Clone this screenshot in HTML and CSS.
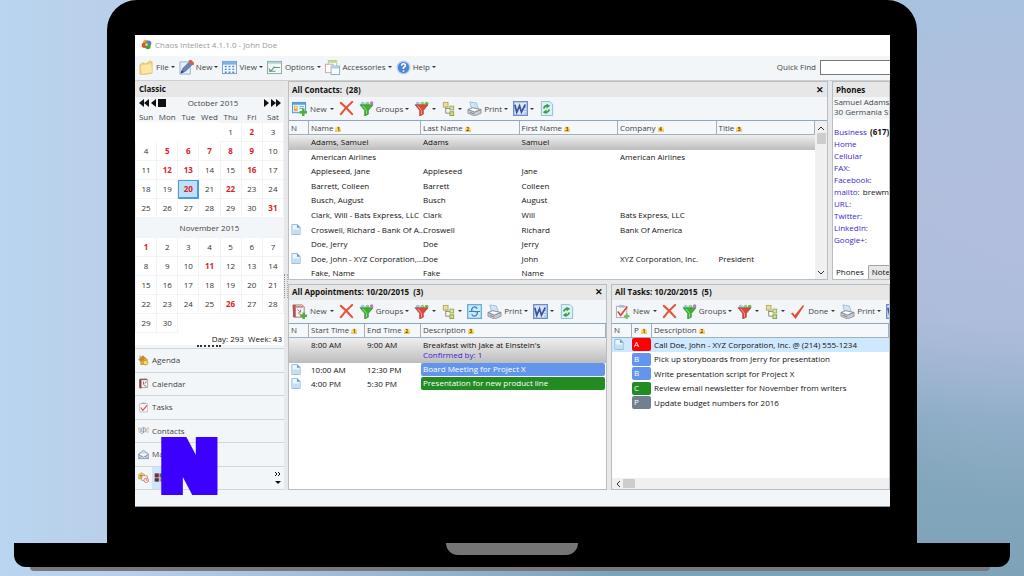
FILE: index.html
```html
<!DOCTYPE html>
<html lang="en">
<head>
    <meta charset="UTF-8">
    <meta name="viewport" content="width=device-width, initial-scale=1.0">
    <title>Chaos Intellect 4.1.1.0 - John Doe</title>
    <link rel="stylesheet" href="styles.css">
</head>
<body>
    <svg class="sprite" aria-hidden="true">
        <symbol id="i-app" viewBox="0 0 16 16">
            <circle cx="7" cy="5" r="4" fill="#e8a33a"/><circle cx="11" cy="6" r="4" fill="#4b86c9"/><circle cx="5" cy="9" r="4" fill="#d8572f"/><circle cx="10" cy="11" r="4" fill="#4f9d3c"/><circle cx="8" cy="8" r="2" fill="#f5d27a"/>
        </symbol>
        <symbol id="i-folder" viewBox="0 0 16 16">
            <path d="M1 5l3-2 3 1 5-3 2 1v12l-11 2-2-1z" fill="#f0d27c" stroke="#d9b75a" stroke-width=".7"/><path d="M2 6l11-2 1 9-11 2z" fill="#fbe7a3"/>
        </symbol>
        <symbol id="i-edit" viewBox="0 0 16 16">
            <path d="M1 2h11v13H1z" fill="#e3effa" stroke="#8fb0d3"/><path d="M2 14l2-5 8-8 3 3-8 8z" fill="#6f7fb8" stroke="#4c5a8c" stroke-width=".6"/><path d="M12 1l3 3" stroke="#d9603f" stroke-width="3" stroke-linecap="round"/><path d="M2 14l1-3 2 2z" fill="#333"/>
        </symbol>
        <symbol id="i-view" viewBox="0 0 16 16">
            <rect x=".5" y="1.500" width="15" height="13" fill="#f4f9fd" stroke="#6ea0d6"/><path d="M1 2h14v3H1z" fill="#7fb2e6"/><path d="M3 7h2M7 7h2M11 7h2M3 10h2M7 10h2M11 10h2M3 13h2M7 13h2M11 13h2" stroke="#4b86c9" stroke-width="1.500"/>
        </symbol>
        <symbol id="i-options" viewBox="0 0 16 16">
            <rect x=".5" y="1.500" width="15" height="13" fill="#f3f9f8" stroke="#86a8ab"/><path d="M1 2h14v2H1z" fill="#b4d2d8"/><path d="M2 9l2 3 4-5M8 8h6M2 12h7" stroke="#5f9a78" stroke-width="1.200" fill="none"/>
        </symbol>
        <symbol id="i-access" viewBox="0 0 16 16">
            <rect x="3.500" y=".5" width="9" height="9" fill="#fdfdf5" stroke="#b8ca90"/><path d="M4 1h8v2H4z" fill="#b9dc84"/><rect x=".5" y="4.500" width="8" height="9" fill="#fff" stroke="#d1a79a"/><rect x="6.500" y="6.500" width="9" height="9" fill="#fff" stroke="#8aafcf"/><path d="M7 7h8v2H7z" fill="#a6cdec"/>
        </symbol>
        <symbol id="i-help" viewBox="0 0 16 16">
            <circle cx="8" cy="8" r="7.500" fill="#b9d3f3"/><circle cx="8" cy="8" r="6" fill="#4f83d3"/><path d="M6 6q0-2 2-2t2 2q0 1-2 2v1.500M8 11v1.500" stroke="#fff" stroke-width="1.700" fill="none"/>
        </symbol>
        <symbol id="i-newcontact" viewBox="0 0 16 16">
            <rect x=".5" y="1.500" width="14" height="11" fill="#eaf4fd" stroke="#4d8dcc"/><path d="M1 2h13v2H1z" fill="#5e9fdc"/><rect x="2" y="5" width="4" height="6" fill="#e2a95a"/><circle cx="4" cy="7" r="1.300" fill="#f7dcb8"/><path d="M8 6h5M8 8h4" stroke="#6ea0d6"/><path d="M12 8v8M8 12h8" stroke="#4fae3c" stroke-width="2.600"/>
        </symbol>
        <symbol id="i-newappt" viewBox="0 0 16 16">
            <path d="M1 1h10l2 2v11H2z" fill="#f8f1f1" stroke="#a77"/><path d="M1 1h3v13H1z" fill="#b6524d"/><path d="M4 2h8v2H4z" fill="#cf8b87"/><path d="M6 6l2 2-1 2 3 2M9 6v3" stroke="#777" fill="none"/><path d="M12.500 9v7M9 12.500h7" stroke="#4fae3c" stroke-width="2.500"/>
        </symbol>
        <symbol id="i-newtask" viewBox="0 0 16 16">
            <rect x="1.500" y="2.500" width="11" height="12" fill="#f7f7fb" stroke="#aab"/><path d="M4 1h6v3H4z" fill="#b3bccb"/><path d="M3 8l3 4 7-9" stroke="#d5493a" stroke-width="1.800" fill="none"/><path d="M12.500 10v6M9.500 13h6" stroke="#6fbf5c" stroke-width="2"/>
        </symbol>
        <symbol id="i-delete" viewBox="0 0 16 16">
            <path d="M2 2q6 5 12 12M14 1q-7 6-12 13" stroke="#e5533b" stroke-width="2.200" stroke-linecap="round" fill="none"/>
        </symbol>
        <symbol id="i-funnel" viewBox="0 0 16 16">
            <circle cx="4" cy="3" r="2.200" fill="#9cc7ec"/><circle cx="9" cy="3" r="2.200" fill="#8fd07a"/><circle cx="13.500" cy="2" r="1.800" fill="#c86ae0"/><path d="M1 4h14l-5 6v4l-4 2v-6z" fill="#3fae35" stroke="#2a8425" stroke-width=".6"/><path d="M4 5l4 5v4" stroke="#9be28c" fill="none"/>
        </symbol>
        <symbol id="i-funnelred" viewBox="0 0 16 16">
            <circle cx="4" cy="3" r="2.200" fill="#9cc7ec"/><circle cx="9" cy="3" r="2.200" fill="#8fd07a"/><circle cx="13.500" cy="2.500" r="1.800" fill="#5fc04c"/><path d="M1 4h14l-5 6v4l-4 2v-6z" fill="#d84a3e" stroke="#a83228" stroke-width=".6"/><path d="M4 5l4 5v4" stroke="#f3a79d" fill="none"/>
        </symbol>
        <symbol id="i-tree" viewBox="0 0 16 16">
            <path d="M5 6v7h5M5 8h5" stroke="#8b8b7a" fill="none"/><rect x="2.500" y="1.500" width="5" height="5" fill="#e6df9e" stroke="#b5a964"/><rect x="9.500" y="5.500" width="4" height="4" fill="#dfe39a" stroke="#9aa75c"/><rect x="9.500" y="11.500" width="4" height="4" fill="#cfdc88" stroke="#8da050"/>
        </symbol>
        <symbol id="i-print" viewBox="0 0 16 16">
            <path d="M3 1l7 1 2 6-7 1z" fill="#cfe6f9" stroke="#86aace" stroke-width=".7"/><path d="M1 9l5-2 9 2v4l-7 3-7-3z" fill="#c9ccd2" stroke="#82878f" stroke-width=".8"/><path d="M1 9l7 3 7-3M3 12l5 2" stroke="#6f747c" stroke-width=".8" fill="none"/><path d="M6 8l6 1-4 2-5-2z" fill="#fff"/>
        </symbol>
        <symbol id="i-word" viewBox="0 0 16 16">
            <rect x=".7" y=".7" width="14.600" height="14.600" fill="#dbe6f6" stroke="#6d8ccb" stroke-width="1.400"/><path d="M12 4h2M12 7h2M12 10h2M12 13h2" stroke="#8aa3d6"/><path d="M2 4l2 8 3-7 2 7 4-8" stroke="#3353a4" stroke-width="1.800" fill="none"/>
        </symbol>
        <symbol id="i-refresh" viewBox="0 0 16 16">
            <path d="M2.500.5h9l3 3v12h-12z" fill="#ddf0f9" stroke="#8dbbd5"/><path d="M5 8q1-3 4-3M11 9q-1 3-4 3" stroke="#38a043" stroke-width="1.800" fill="none"/><path d="M8 3l4 2-4 3zM8 9l-4 3 4 2z" fill="#38a043"/>
        </symbol>
        <symbol id="i-sync" viewBox="0 0 16 16">
            <rect x=".7" y=".7" width="14.600" height="14.600" fill="#cfe8fb" stroke="#67aee0" stroke-width="1.400"/><path d="M11 5q-1-2-3-2T5 5.500 8 8t3 2.500T8 13t-3-2M2 8h12" stroke="#3a82bd" stroke-width="1.300" fill="none"/>
        </symbol>
        <symbol id="i-done" viewBox="0 0 16 16">
            <path d="M1 10l2-1 2 3 9-11 1 1-9 14z" fill="#e04a39"/>
        </symbol>
        <symbol id="i-note" viewBox="0 0 10 12">
            <path d="M.5.500h6l3 3v8h-9z" fill="#eef6fd" stroke="#8fb4dc"/><path d="M1 6h8v5H1z" fill="#c4def5"/><path d="M6 .5l3.500 3.500H6z" fill="#5b97d6"/>
        </symbol>
        <symbol id="i-agenda" viewBox="0 0 16 16">
            <path d="M1 7l6-6 7 6-2 1v5l-8 1V8z" fill="#f0b832" stroke="#a8741c" stroke-width=".8"/><path d="M1 7l6-6 4 4-6 5z" fill="#c98a2a"/><circle cx="11" cy="11" r="3.500" fill="#f5d66b" stroke="#8a6a20" stroke-width=".7"/><path d="M3 4V1" stroke="#555"/>
        </symbol>
        <symbol id="i-calendar" viewBox="0 0 16 16">
            <path d="M2 2h12v12H3z" fill="#f3eeee" stroke="#9b8686"/><path d="M2 2h3v13H2z" fill="#8e3e3b"/><path d="M3 1h10v2H3z" fill="#8e5a58"/><path d="M8 5v4l4 4M12 5l-2 3" stroke="#666" stroke-width="1.200" fill="none"/>
        </symbol>
        <symbol id="i-tasks" viewBox="0 0 16 16">
            <rect x="2.500" y="2.500" width="11" height="12" fill="#f8f8fb" stroke="#b3b3c0"/><path d="M5 1h6v2H5z" fill="#aab"/><path d="M4 8l3 4 6-7" stroke="#d5493a" stroke-width="1.600" fill="none"/>
        </symbol>
        <symbol id="i-contacts" viewBox="0 0 16 16">
            <path d="M1 4l3 2v4l-2 1z" fill="#fff" stroke="#d38d62"/><path d="M15 4l-3 2v4l2 1z" fill="#fff" stroke="#d3a362"/><circle cx="8" cy="7" r="3.500" fill="#d7e7f5" stroke="#7a9cc0"/><path d="M8 4v7q-2 2-4 1" stroke="#6d8cb4" fill="none"/>
        </symbol>
        <symbol id="i-mail" viewBox="0 0 16 16">
            <path d="M1 7l7-5 7 5v7H1z" fill="#d3e2f7" stroke="#6b83b8"/><path d="M3 6h10v4l-5 2-5-2z" fill="#fffbe0" stroke="#b8b890" stroke-width=".6"/><path d="M1 8l7 4 7-4M1 14l5-4M15 14l-5-4" stroke="#6b83b8" fill="none"/>
        </symbol>
        <symbol id="i-plan" viewBox="0 0 16 16">
            <path d="M1 4l4-3 5 3v6H1z" fill="#f3cd54" stroke="#ae8330" stroke-width=".8"/><rect x="5.500" y="5.500" width="8" height="7" fill="#f7f2ee" stroke="#a88"/><circle cx="12" cy="12" r="3.300" fill="#fff" stroke="#c34" stroke-width=".9"/><path d="M12 10v2h2M3 5h3M3 7h2" stroke="#8a5a20" fill="none"/>
        </symbol>
        <symbol id="i-blocks" viewBox="0 0 16 16">
            <path d="M1 2h6v6H1z" fill="#8c2335"/><path d="M8 2h6v6H8z" fill="#3c7d35"/><path d="M1 9h6v5H1z" fill="#403a44"/><path d="M8 9h6v5H8z" fill="#d08b2c"/>
        </symbol>
    </svg>

    <div class="lid">
        <div class="screen">
            <header class="titlebar">
                <svg class="icon-sm"><use href="#i-app"/></svg>
                <h1>Chaos Intellect 4.1.1.0 - John Doe</h1>
            </header>

            <nav class="menubar">
                <button type="button" class="tool caret"><svg class="icon"><use href="#i-folder"/></svg>File</button>
                <button type="button" class="tool caret"><svg class="icon"><use href="#i-edit"/></svg>New</button>
                <button type="button" class="tool caret"><svg class="icon"><use href="#i-view"/></svg>View</button>
                <button type="button" class="tool caret wide"><svg class="icon"><use href="#i-options"/></svg>Options</button>
                <button type="button" class="tool caret"><svg class="icon"><use href="#i-access"/></svg>Accessories</button>
                <button type="button" class="tool caret"><svg class="icon"><use href="#i-help"/></svg>Help</button>
                <label class="find-label" for="quick-find">Quick Find</label>
                <input class="find" id="quick-find" type="text">
            </nav>

            <div class="workspace">
                <aside class="sidebar">
                    <h2 class="panel-title">Classic</h2>
                    <div class="month-nav">
                        <button type="button" class="step" aria-label="Previous year"><svg class="step-icon wide-step" viewBox="0 0 10 8"><path d="M5 0v8L0 4zM10 0v8L5 4z"/></svg></button>
                        <button type="button" class="step" aria-label="Previous month"><svg class="step-icon" viewBox="0 0 5 8"><path d="M5 0v8L0 4z"/></svg></button>
                        <button type="button" class="step" aria-label="Today"><svg class="step-icon square" viewBox="0 0 8 8"><path d="M0 0h8v8H0z"/></svg></button>
                        <span class="month-name">October 2015</span>
                        <button type="button" class="step" aria-label="Next month"><svg class="step-icon" viewBox="0 0 5 8"><path d="M0 0v8l5-4z"/></svg></button>
                        <button type="button" class="step" aria-label="Next year"><svg class="step-icon wide-step" viewBox="0 0 10 8"><path d="M0 0v8l5-4zM5 0v8l5-4z"/></svg></button>
                    </div>
                    <table class="month">
                        <thead>
                            <tr><th>Sun</th><th>Mon</th><th>Tue</th><th>Wed</th><th>Thu</th><th>Fri</th><th>Sat</th></tr>
                        </thead>
                        <tbody>
                            <tr><td class="none"></td><td class="none"></td><td class="none"></td><td class="none"></td><td>1</td><td class="busy">2</td><td>3</td></tr>
                            <tr><td>4</td><td class="busy">5</td><td class="busy">6</td><td class="busy">7</td><td class="busy">8</td><td class="busy">9</td><td>10</td></tr>
                            <tr><td>11</td><td class="busy">12</td><td class="busy">13</td><td>14</td><td>15</td><td class="busy">16</td><td>17</td></tr>
                            <tr><td>18</td><td>19</td><td class="busy today">20</td><td>21</td><td class="busy">22</td><td>23</td><td>24</td></tr>
                            <tr><td>25</td><td>26</td><td>27</td><td>28</td><td>29</td><td>30</td><td class="busy">31</td></tr>
                        </tbody>
                    </table>
                    <table class="month">
                        <caption>November 2015</caption>
                        <tbody>
                            <tr><td class="busy">1</td><td>2</td><td>3</td><td>4</td><td>5</td><td>6</td><td>7</td></tr>
                            <tr><td>8</td><td>9</td><td>10</td><td class="busy">11</td><td>12</td><td>13</td><td>14</td></tr>
                            <tr><td>15</td><td>16</td><td>17</td><td>18</td><td>19</td><td>20</td><td>21</td></tr>
                            <tr><td>22</td><td>23</td><td>24</td><td>25</td><td class="busy">26</td><td>27</td><td>28</td></tr>
                            <tr><td>29</td><td>30</td><td class="none"></td><td class="none"></td><td class="none"></td><td class="none"></td><td class="none"></td></tr>
                        </tbody>
                    </table>
                    <p class="day-count">Day: 293&nbsp; Week: 43</p>
                    <div class="grip"></div>
                    <nav class="sections">
                        <a href="#agenda"><svg class="icon-sm"><use href="#i-agenda"/></svg>Agenda</a>
                        <a href="#calendar"><svg class="icon-sm"><use href="#i-calendar"/></svg>Calendar</a>
                        <a href="#tasks"><svg class="icon-sm"><use href="#i-tasks"/></svg>Tasks</a>
                        <a href="#contacts"><svg class="icon-sm"><use href="#i-contacts"/></svg>Contacts</a>
                        <a href="#mail"><svg class="icon-sm"><use href="#i-mail"/></svg>Mail</a>
                        <div class="section-extra">
                            <button type="button" class="mini" aria-label="Planner"><svg class="icon-sm"><use href="#i-plan"/></svg></button>
                            <button type="button" class="mini on" aria-label="Templates"><svg class="icon-sm"><use href="#i-blocks"/></svg></button>
                            <button type="button" class="more" aria-label="More"><svg viewBox="0 0 6 14"><path d="M0 1l2 2-2 2M3 1l2 2-2 2" fill="none" stroke="#111"/><path d="M0 10h6l-3 3z" fill="#111"/></svg></button>
                        </div>
                    </nav>
                </aside>

                <div class="splitter"></div>

                <main class="panes">
                    <div class="row-top">
                        <section class="panel" id="contacts">
                            <h2 class="panel-title">All Contacts:&nbsp; (28)<button type="button" class="close" aria-label="Close">✕</button></h2>
                            <div class="toolbar">
                                <button type="button" class="tool caret wide"><svg class="icon"><use href="#i-newcontact"/></svg>New</button>
                                <button type="button" class="tool" aria-label="Delete"><svg class="icon"><use href="#i-delete"/></svg></button>
                                <button type="button" class="tool caret"><svg class="icon"><use href="#i-funnel"/></svg>Groups</button>
                                <button type="button" class="tool caret wide" aria-label="Filter"><svg class="icon"><use href="#i-funnelred"/></svg></button>
                                <button type="button" class="tool caret" aria-label="Outline"><svg class="icon"><use href="#i-tree"/></svg></button>
                                <button type="button" class="tool caret"><svg class="icon"><use href="#i-print"/></svg>Print</button>
                                <button type="button" class="tool caret" aria-label="Word"><svg class="icon"><use href="#i-word"/></svg></button>
                                <button type="button" class="tool" aria-label="Refresh"><svg class="icon"><use href="#i-refresh"/></svg></button>
                            </div>
                            <div class="list">
                                <table class="grid contacts">
                                    <colgroup><col class="c-n"><col class="c-name"><col><col><col><col></colgroup>
                                    <thead>
                                        <tr><th>N</th><th>Name<span class="sort">1</span></th><th>Last Name<span class="sort">2</span></th><th>First Name<span class="sort">3</span></th><th>Company<span class="sort">4</span></th><th>Title<span class="sort">5</span></th></tr>
                                    </thead>
                                    <tbody>
                                        <tr class="selected"><td></td><td>Adams, Samuel</td><td>Adams</td><td>Samuel</td><td></td><td></td></tr>
                                        <tr><td></td><td>American Airlines</td><td></td><td></td><td>American Airlines</td><td></td></tr>
                                        <tr><td></td><td>Appleseed, Jane</td><td>Appleseed</td><td>Jane</td><td></td><td></td></tr>
                                        <tr><td></td><td>Barrett, Colleen</td><td>Barrett</td><td>Colleen</td><td></td><td></td></tr>
                                        <tr><td></td><td>Busch, August</td><td>Busch</td><td>August</td><td></td><td></td></tr>
                                        <tr><td></td><td>Clark, Will - Bats Express, LLC</td><td>Clark</td><td>Will</td><td>Bats Express, LLC</td><td></td></tr>
                                        <tr><td><svg class="note"><use href="#i-note"/></svg></td><td>Croswell, Richard - Bank Of A...</td><td>Croswell</td><td>Richard</td><td>Bank Of America</td><td></td></tr>
                                        <tr><td></td><td>Doe, Jerry</td><td>Doe</td><td>Jerry</td><td></td><td></td></tr>
                                        <tr><td><svg class="note"><use href="#i-note"/></svg></td><td>Doe, John - XYZ Corporation,...</td><td>Doe</td><td>John</td><td>XYZ Corporation, Inc.</td><td>President</td></tr>
                                        <tr><td></td><td>Fake, Name</td><td>Fake</td><td>Name</td><td></td><td></td></tr>
                                    </tbody>
                                </table>
                                <div class="vscroll">
                                    <svg class="chev" viewBox="0 0 6 4"><path d="M0 4l3-3 3 3"/></svg>
                                    <span class="vthumb"></span>
                                    <svg class="chev" viewBox="0 0 6 4"><path d="M0 0l3 3 3-3"/></svg>
                                </div>
                            </div>
                        </section>

                        <section class="panel phones">
                            <h2 class="panel-title">Phones</h2>
                            <p class="address">Samuel Adams<br>30 Germania Street</p>
                            <ul class="phone-list">
                                <li><a href="#business">Business</a> <b>(617) 3</b></li>
                                <li><a href="#home">Home</a></li>
                                <li><a href="#cellular">Cellular</a></li>
                                <li><a href="#fax">FAX:</a></li>
                                <li><a href="#facebook">Facebook:</a></li>
                                <li><a href="#mailto">mailto:</a> brewmas</li>
                                <li><a href="#url">URL:</a></li>
                                <li><a href="#twitter">Twitter:</a></li>
                                <li><a href="#linkedin">LinkedIn:</a></li>
                                <li><a href="#google">Google+:</a></li>
                            </ul>
                            <div class="tabs">
                                <button type="button" class="tab active">Phones</button>
                                <button type="button" class="tab">Notes</button>
                            </div>
                        </section>
                    </div>

                    <div class="row-bottom">
                        <section class="panel" id="calendar">
                            <h2 class="panel-title">All Appointments: 10/20/2015&nbsp; (3)<button type="button" class="close" aria-label="Close">✕</button></h2>
                            <div class="toolbar">
                                <button type="button" class="tool caret wide"><svg class="icon"><use href="#i-newappt"/></svg>New</button>
                                <button type="button" class="tool" aria-label="Delete"><svg class="icon"><use href="#i-delete"/></svg></button>
                                <button type="button" class="tool caret"><svg class="icon"><use href="#i-funnel"/></svg>Groups</button>
                                <button type="button" class="tool caret wide" aria-label="Filter"><svg class="icon"><use href="#i-funnelred"/></svg></button>
                                <button type="button" class="tool caret" aria-label="Outline"><svg class="icon"><use href="#i-tree"/></svg></button>
                                <button type="button" class="tool" aria-label="Sync"><svg class="icon"><use href="#i-sync"/></svg></button>
                                <button type="button" class="tool caret"><svg class="icon"><use href="#i-print"/></svg>Print</button>
                                <button type="button" class="tool caret" aria-label="Word"><svg class="icon"><use href="#i-word"/></svg></button>
                                <button type="button" class="tool" aria-label="Refresh"><svg class="icon"><use href="#i-refresh"/></svg></button>
                            </div>
                            <div class="list">
                                <table class="grid">
                                    <colgroup><col class="c-n"><col class="c-time"><col class="c-time"><col></colgroup>
                                    <thead>
                                        <tr><th>N</th><th>Start Time<span class="sort">1</span></th><th>End Time<span class="sort">2</span></th><th>Description<span class="sort">3</span></th></tr>
                                    </thead>
                                    <tbody>
                                        <tr class="selected tall"><td></td><td>8:00 AM</td><td>9:00 AM</td><td>Breakfast with Jake at Einstein's<br><span class="confirmed">Confirmed by: 1</span></td></tr>
                                        <tr><td><svg class="note"><use href="#i-note"/></svg></td><td>10:00 AM</td><td>12:30 PM</td><td class="flush"><span class="event blue">Board Meeting for Project X</span></td></tr>
                                        <tr><td><svg class="note"><use href="#i-note"/></svg></td><td>4:00 PM</td><td>5:30 PM</td><td class="flush"><span class="event green">Presentation for new product line</span></td></tr>
                                    </tbody>
                                </table>
                            </div>
                        </section>

                        <section class="panel" id="tasks">
                            <h2 class="panel-title">All Tasks: 10/20/2015&nbsp; (5)</h2>
                            <div class="toolbar">
                                <button type="button" class="tool caret wide"><svg class="icon"><use href="#i-newtask"/></svg>New</button>
                                <button type="button" class="tool" aria-label="Delete"><svg class="icon"><use href="#i-delete"/></svg></button>
                                <button type="button" class="tool caret"><svg class="icon"><use href="#i-funnel"/></svg>Groups</button>
                                <button type="button" class="tool caret wide" aria-label="Filter"><svg class="icon"><use href="#i-funnelred"/></svg></button>
                                <button type="button" class="tool caret" aria-label="Outline"><svg class="icon"><use href="#i-tree"/></svg></button>
                                <button type="button" class="tool caret wide"><svg class="icon"><use href="#i-done"/></svg>Done</button>
                                <button type="button" class="tool caret"><svg class="icon"><use href="#i-print"/></svg>Print</button>
                                <button type="button" class="tool caret" aria-label="Word"><svg class="icon"><use href="#i-word"/></svg></button>
                            </div>
                            <div class="list column">
                                <table class="grid">
                                    <colgroup><col class="c-n"><col class="c-n"><col></colgroup>
                                    <thead>
                                        <tr><th>N</th><th>P<span class="sort">1</span></th><th>Description<span class="sort">2</span></th></tr>
                                    </thead>
                                    <tbody>
                                        <tr class="current"><td><svg class="note"><use href="#i-note"/></svg></td><td class="flush"><span class="event red">A</span></td><td>Call Doe, John - XYZ Corporation, Inc. @ (214) 555-1234</td></tr>
                                        <tr><td></td><td class="flush"><span class="event blue">B</span></td><td>Pick up storyboards from Jerry for presentation</td></tr>
                                        <tr><td></td><td class="flush"><span class="event blue">B</span></td><td>Write presentation script for Project X</td></tr>
                                        <tr><td></td><td class="flush"><span class="event green">C</span></td><td>Review email newsletter for November from writers</td></tr>
                                        <tr><td></td><td class="flush"><span class="event slate">P</span></td><td>Update budget numbers for 2016</td></tr>
                                    </tbody>
                                </table>
                                <div class="hscroll">
                                    <svg class="chev side" viewBox="0 0 4 6"><path d="M4 0l-3 3 3 3"/></svg>
                                    <span class="hthumb"></span>
                                </div>
                            </div>
                        </section>
                    </div>
                </main>
            </div>

            <footer class="statusbar"></footer>
            <div class="badge">N</div>
        </div>
    </div>
    <div class="base"><div class="notch"></div></div>
    <div class="foot"></div>
</body>
</html>
```
FILE: styles.css
```css
* {
    box-sizing: border-box;
}
body {
    margin: 0;
    height: 100vh;
    padding-bottom: 5px;
    display: flex;
    flex-direction: column;
    overflow: hidden;
    font-family: "Open Sans", "Noto Sans", sans-serif;
    font-size: 8px;
    line-height: 10px;
    color: #111;
    background:
        radial-gradient(circle at 100% 38%, rgba(178, 190, 222, 0.9), rgba(178, 190, 222, 0) 26%),
        linear-gradient(90deg, #b9d5ef 0%, #bacfe9 12%, rgba(186, 207, 233, 0) 60%),
        linear-gradient(180deg, #a6c3df 0%, #b0c0dc 35%, #a8bbd8 55%, #86a9c0 72%, #7ea3b8 100%);
}
h1, h2, p, ul {
    margin: 0;
    padding: 0;
    font-size: 8px;
    font-weight: 400;
}
button, input {
    font: inherit;
    color: inherit;
    margin: 0;
    padding: 0;
    border: 0;
    background: none;
}
button {
    cursor: pointer;
}
.sprite {
    position: absolute;
    width: 0;
    height: 0;
}

/* Laptop */
.lid {
    flex: 1;
    min-height: 0;
    display: flex;
    margin: 0 107px;
    padding: 35px 27px 36px 28px;
    background: #000;
    border-radius: 30px 30px 0 0;
}
.base {
    flex: none;
    height: 24px;
    margin: 0 14px;
    background: #000;
    border-radius: 0 0 12px 12px;
}
.notch {
    width: 132px;
    height: 12px;
    margin: 0 auto;
    background: #757575;
    border-radius: 0 0 12px 12px;
}
.foot {
    flex: none;
    height: 4px;
    margin: 0 34px 0 30px;
    background: #77777c;
    border-radius: 0 0 4px 4px;
}

/* Application window */
.screen {
    position: relative;
    flex: 1;
    min-width: 0;
    display: flex;
    flex-direction: column;
    overflow: hidden;
    background: #f3f6f8;
    border-bottom: 1px solid #8f979d;
    white-space: nowrap;
}
.titlebar {
    flex: none;
    height: 21px;
    display: flex;
    align-items: center;
    gap: 3px;
    padding: 0 0 2px 6px;
    background: #fff;
}
.titlebar h1 {
    color: #999;
}
.icon {
    width: 15px;
    height: 15px;
    flex: none;
}
.icon-sm {
    width: 11px;
    height: 11px;
    flex: none;
}
.menubar {
    flex: none;
    height: 24px;
    display: flex;
    align-items: center;
    gap: 4px;
    padding: 0 0 2px 4px;
}
.tool {
    display: flex;
    align-items: center;
    gap: 2px;
    color: #444;
    flex: none;
}
.caret::after {
    content: "";
    border: 2px solid transparent;
    border-top-color: #333;
    border-bottom: 0;
}
.caret.wide {
    gap: 3px;
}
.find-label {
    margin-left: auto;
    color: #444;
}
.find {
    width: 70px;
    height: 15px;
    border: 1px solid #777;
    border-right: 0;
    background: #fff;
}
.workspace {
    flex: 1;
    min-height: 0;
    display: flex;
    background: #e6e8ea;
    border-top: 1px solid #cfcfcf;
}
.statusbar {
    flex: none;
    height: 16px;
}
.panel-title {
    flex: none;
    display: flex;
    align-items: center;
    height: 16px;
    padding: 0 3px 0 4px;
    background: #e7e7e7;
    font-weight: 700;
}
.panel .panel-title {
    height: 15px;
    padding-left: 3px;
}
.close {
    margin-left: auto;
    font-size: 9px;
    font-weight: 700;
}

/* Sidebar */
.sidebar {
    width: 149px;
    flex: none;
    display: flex;
    flex-direction: column;
    background: #f3f6f8;
}
.month-nav {
    flex: none;
    height: 11px;
    display: flex;
    align-items: center;
    gap: 2px;
    padding: 0 3px 0 4px;
}
.month-name {
    flex: 1;
    padding-right: 4px;
    text-align: center;
    color: #444;
}
.step {
    display: flex;
}
.step-icon {
    width: 5px;
    height: 8px;
    fill: #111;
}
.wide-step {
    width: 10px;
}
.square {
    width: 8px;
}
.month {
    flex: none;
    table-layout: fixed;
    width: 100%;
    border-collapse: collapse;
    background: #fff;
    text-align: center;
    color: #333;
}
.month th,
.month caption {
    background: #f3f6f8;
    font-weight: 400;
    padding: 0;
    color: #444;
}
.month th {
    height: 14px;
    padding-top: 4px;
}
.month caption {
    height: 19px;
    line-height: 19px;
}
.month td {
    height: 19px;
    padding: 0;
    border: 1px solid #f1f3f4;
}
.month td.none {
    border-color: #fff;
}
.month td.busy {
    color: #d8232a;
    font-weight: 700;
}
.month td.today {
    background: #bfe0f8;
    box-shadow: inset 0 0 0 1px #4a9be0;
    border-color: #4a9be0;
}
.day-count {
    flex: none;
    height: 12px;
    line-height: 12px;
    padding-right: 2px;
    background: #fff;
    text-align: right;
}
.grip {
    flex: none;
    width: 24px;
    height: 3px;
    margin-left: 62px;
    border-top: 2px dotted #333;
}
.sections {
    flex: 1;
    display: flex;
    flex-direction: column;
    border-bottom: 1px solid #d3d6d8;
}
.sections a,
.section-extra {
    flex: 1;
    display: flex;
    align-items: center;
    gap: 3px;
    padding-left: 3px;
    border-top: 1px solid #d3d6d8;
    color: #444;
    text-decoration: none;
}
.mini {
    display: flex;
    align-items: center;
    align-self: stretch;
}
.mini.on {
    padding: 0 2px;
    background: #cde6fa;
}
.more {
    margin: 0 3px 0 auto;
}
.more svg {
    display: block;
    width: 6px;
    height: 14px;
}
.splitter {
    flex: none;
    width: 4px;
    height: 24px;
    align-self: center;
    border-left: 1px dotted #888;
    border-right: 1px dotted #aaa;
}

/* Panels */
.panes {
    flex: 1;
    min-width: 0;
    display: flex;
    flex-direction: column;
    gap: 4px;
}
.row-top,
.row-bottom {
    min-height: 0;
    display: grid;
    gap: 4px;
    grid-template-rows: minmax(0, 1fr);
}
.row-top {
    flex: 199;
    grid-template-columns: minmax(0, 1fr) 58px;
}
.row-bottom {
    flex: 207;
    grid-template-columns: 53% minmax(0, 1fr);
}
.panel {
    display: flex;
    flex-direction: column;
    min-width: 0;
    overflow: hidden;
    background: #f3f6f8;
    border: 1px solid #b9bec3;
}
.toolbar {
    flex: none;
    height: 23px;
    display: flex;
    align-items: center;
    gap: 5px;
    padding-left: 3px;
    overflow: hidden;
}
.list {
    flex: 1;
    min-height: 0;
    display: flex;
    align-items: flex-start;
    overflow: hidden;
    background: #fff;
    border-top: 1px solid #8fa6bb;
}
.list.column {
    flex-direction: column;
}
.grid {
    flex: 1;
    width: 100%;
    min-width: 0;
    table-layout: fixed;
    border-collapse: separate;
    border-spacing: 0;
}
.list.column .grid {
    flex: none;
}
.contacts {
    height: calc(100% + 2px);
}
.c-n {
    width: 20px;
}
.c-name {
    width: 112px;
}
.c-time {
    width: 56px;
}
.grid th {
    height: 14px;
    padding: 0 2px;
    text-align: left;
    font-weight: 400;
    color: #444;
    background: #f5f8fa;
    border-right: 1px solid #9fb0bf;
    border-bottom: 1px solid #9fb0bf;
}
.grid td {
    height: 14px;
    padding: 0 0 0 2px;
}
.list.column tr:nth-child(even) td {
    height: 15px;
}
.sort {
    display: inline-block;
    width: 6px;
    margin-left: 2px;
    font-size: 5px;
    line-height: 6px;
    font-weight: 700;
    text-align: center;
    color: #5a4200;
    background: linear-gradient(#fdeeb5, #f3c64a);
    border-radius: 3px 3px 0 0;
}
.grid .selected {
    background: linear-gradient(#efefef, #bdbdbd);
}
.grid .current {
    background: #cde8ff;
}
.grid .tall td {
    height: 25px;
    padding-top: 2px;
    vertical-align: top;
}
.grid .flush {
    padding: 0 1px 0 0;
}
.confirmed {
    color: #3a1fd0;
}
.note {
    display: block;
    width: 10px;
    height: 11px;
}
.event {
    display: block;
    height: 13px;
    padding-left: 2px;
    line-height: 12px;
    border-radius: 2px;
    color: #fff;
}
.blue {
    background: #6495ed;
}
.green {
    background: #228b22;
}
.red {
    background: #f00;
}
.slate {
    background: #708090;
}

/* Scrollbars */
.vscroll {
    flex: none;
    align-self: stretch;
    width: 12px;
    display: flex;
    flex-direction: column;
    align-items: center;
    gap: 3px;
    padding: 5px 0 4px;
    background: #f0f0f0;
}
.chev {
    width: 6px;
    height: 4px;
    fill: none;
    stroke: #333;
}
.chev.side {
    width: 4px;
    height: 6px;
}
.vthumb {
    width: 9px;
    height: 11px;
    margin-bottom: auto;
    background: #cdcdcd;
}
.hscroll {
    width: 100%;
    height: 11px;
    display: flex;
    align-items: center;
    gap: 3px;
    margin-top: auto;
    padding-left: 4px;
    background: #f0f0f0;
}
.hthumb {
    width: 12px;
    height: 9px;
    background: #cdcdcd;
}

/* Phones */
.address {
    flex: none;
    height: 22px;
    padding-left: 1px;
    color: #444;
}
.phone-list {
    flex: 1;
    padding: 7px 0 0 1px;
    list-style: none;
    line-height: 12px;
    background: #fff;
}
.phone-list a {
    margin-right: 1px;
    color: #3a1fd0;
    text-decoration: none;
}
.tabs {
    flex: none;
    display: flex;
    height: 14px;
    background: #e7e7e7;
}
.tab {
    flex: none;
    padding: 0 4px 0 3px;
    border-right: 1px solid #a5a5a5;
    border-top: 1px solid #a5a5a5;
}
.tab.active {
    background: #fff;
    border-top-color: #fff;
}

.badge {
    position: absolute;
    left: 26px;
    top: 401px;
    font-family: "Noto Sans", "Open Sans", sans-serif;
    font-size: 68px;
    line-height: 56px;
    font-weight: 900;
    color: #3c00ff;
    -webkit-text-stroke: 10px #3c00ff;
}
```
